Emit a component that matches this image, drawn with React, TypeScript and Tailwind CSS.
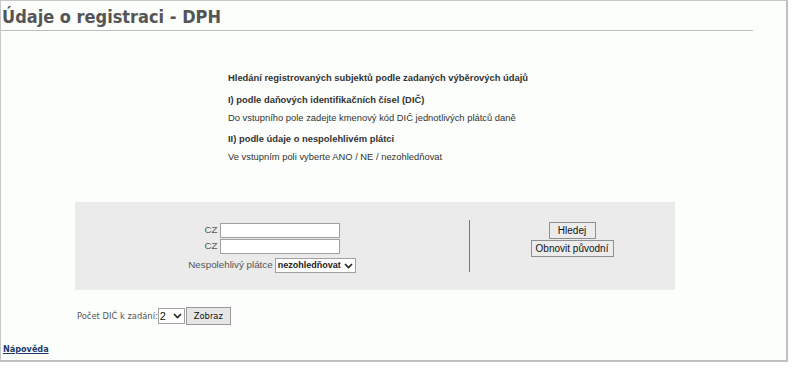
import React from "react";

export default function App() {
  const arial = { fontFamily: '"Liberation Sans", Arial, sans-serif' };
  const dv = { fontFamily: '"DejaVu Sans Condensed", "DejaVu Sans", sans-serif' };
  return (
    <div className="w-[800px] h-[374px] bg-white overflow-hidden">
      <div className="w-[788px] h-[362px] bg-[#fbfefb] border-l border-t border-[#c8c8c8] border-r-2 border-b-2 border-r-[#c0c0c0] border-b-[#c0c0c0] flex flex-col">
        <h1
          className="pl-[1px] pt-[5px] h-[30px] text-[18px] leading-[22px] font-bold text-[#555555] border-b border-[#bdbdbd] w-[752px]"
          style={dv}
        >
          Údaje o registraci - DPH
        </h1>
        <div className="pl-[227px] pt-[40px] text-[9.4px] leading-[13px] text-[#333333]" style={arial}>
          <div className="font-bold">Hledání registrovaných subjektů podle zadaných výběrových údajů</div>
          <div className="font-bold mt-[9px]">I) podle daňových identifikačních čísel (DIČ)</div>
          <div className="mt-[5px]">Do vstupního pole zadejte kmenový kód DIČ jednotlivých plátců daně</div>
          <div className="font-bold mt-[8px]">II) podle údaje o nespolehlivém plátci</div>
          <div className="mt-[5px]">Ve vstupním poli vyberte ANO / NE / nezohledňovat</div>
        </div>
        <div className="ml-[74px] mt-[39px] w-[600px] h-[88px] bg-[#ebebeb] flex text-[#555555]" style={arial}>
          <div className="w-[394px] flex flex-col items-center pt-[21px] text-[9.8px]">
            <div className="flex flex-col items-end gap-[1px]">
              <div className="flex items-center gap-[2px]">
                <span>CZ</span>
                <div className="w-[120px] h-[15px] bg-white border border-[#a0a0a0]" />
              </div>
              <div className="flex items-center gap-[2px]">
                <span>CZ</span>
                <div className="w-[120px] h-[15px] bg-white border border-[#a0a0a0]" />
              </div>
            </div>
            <div className="flex items-center gap-[2px] mt-[4px]">
              <span>Nespolehlivý plátce</span>
              <div className="h-[15px] w-[81px] bg-white border border-[#a0a0a0] flex items-center justify-between pl-[2px] pr-[2px] text-[#222] text-[9px] font-bold">
                <span>nezohledňovat</span>
                <svg width="9" height="6" viewBox="0 0 9 6"><path d="M1 1l3.5 3.5L8 1" stroke="#222" strokeWidth="1.6" fill="none" /></svg>
              </div>
            </div>
          </div>
          <div className="flex-1 relative flex flex-col items-center pt-[20px] gap-[1px]">
            <div className="absolute left-0 top-[18px] w-px h-[52px] bg-[#777]" />
            <div className="h-[17px] w-[47px] justify-center text-[10px] text-[#111] bg-[#ececec] border border-[#8f8f8f] flex items-center">Hledej</div>
            <div className="h-[17px] w-[83px] justify-center text-[10px] text-[#111] bg-[#ececec] border border-[#8f8f8f] flex items-center">Obnovit původní</div>
          </div>
        </div>
        <div className="pl-[76px] mt-[17px] flex items-center text-[9.3px] text-[#555555]" style={dv}>
          <span>Počet DIČ k zadání:</span>
          <div className="h-[16px] w-[27px] bg-white border border-[#a0a0a0] flex items-center justify-between pl-[1px] pr-[2px] text-[#111] text-[11px]" style={arial}>
            <span>2</span>
            <svg width="9" height="6" viewBox="0 0 9 6"><path d="M1 1l3.5 3.5L8 1" stroke="#222" strokeWidth="1.6" fill="none" /></svg>
          </div>
          <div className="ml-[1px] h-[18px] w-[45px] justify-center bg-[#e6e6e6] border border-[#9a9a9a] text-[#111] flex items-center">Zobraz</div>
        </div>
        <a href="#" className="self-start ml-[2px] mt-[18px] text-[9px] font-bold text-[#1c3a6b] underline" style={dv}>
          Nápověda
        </a>
      </div>
    </div>
  );
}
